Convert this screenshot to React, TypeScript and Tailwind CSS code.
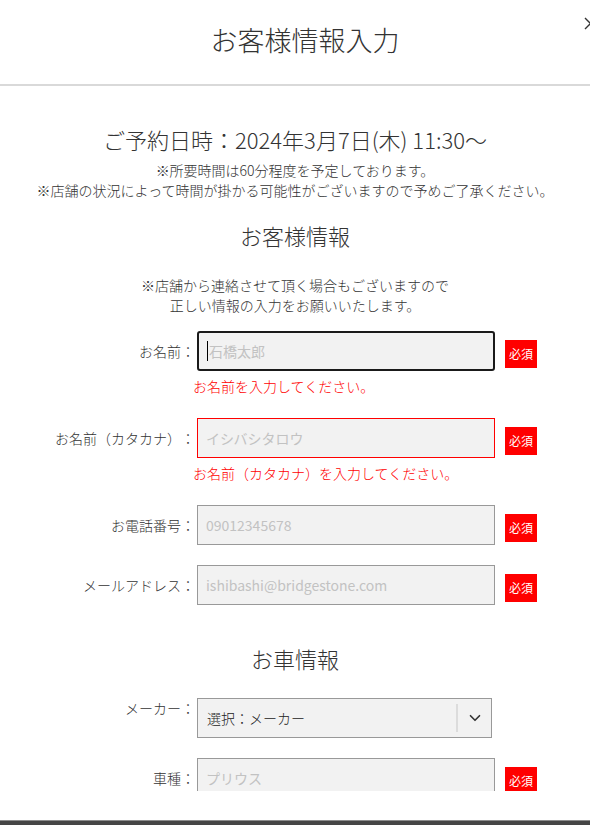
import { ChevronDown } from "lucide-react";

const font = { fontFamily: '"Noto Sans CJK JP", "Noto Sans", sans-serif' };

function Badge() {
  return (
    <span className="mt-[9px] ml-[10px] flex h-[28px] w-[32px] shrink-0 items-center justify-center bg-[#ff0000] text-[12px] leading-none text-white">
      必須
    </span>
  );
}

function Field({
  label,
  placeholder,
  error,
  variant = "normal",
}: {
  label: string;
  placeholder: string;
  error?: string;
  variant?: "normal" | "focus" | "error";
}) {
  const border =
    variant === "focus"
      ? "border-2 border-[#1a1a1a] rounded-[3px]"
      : variant === "error"
        ? "border border-[#ff0000]"
        : "border border-[#999999]";
  return (
    <div className="mb-[20px]">
      <div className="flex items-start">
        <label className="flex h-[40px] w-[197px] shrink-0 items-center justify-end pr-[2px] text-[14px] font-light text-[#333333]">
          {label}
        </label>
        <div className={`flex h-[40px] w-[298px] shrink-0 items-center bg-[#f2f2f2] px-[8px] text-[14px] text-[#c2c2c2] ${border}`}>
          {variant === "focus" && <span className="mr-[1px] h-[20px] w-px bg-black" />}
          {placeholder}
        </div>
        <Badge />
      </div>
      {error && (
        <p className="ml-[193px] pt-[5px] pb-[2px] text-[14px] leading-[20px] font-light text-[#ff0000]">{error}</p>
      )}
    </div>
  );
}

export default function App() {
  return (
    <div className="min-h-screen bg-[#454545] [text-spacing-trim:space-all]" style={font}>
      <div className="relative flex h-[821px] flex-col overflow-hidden border-b border-[#8c8c8c] bg-white">
        <header className="flex h-[86px] shrink-0 items-center justify-center border-b-2 border-[#d9d9d9] pb-[4px] pl-[20px]">
          <h1 className="text-[27px] font-light text-[#333333]">お客様情報入力</h1>
        </header>
        <svg className="absolute top-[17px] right-[-7px] h-[13px] w-[13px]" viewBox="0 0 13 13">
          <path d="M1 1 L12 12 M12 1 L1 12" stroke="#333333" strokeWidth="1.4" fill="none" />
        </svg>

        <div className="h-[705px] shrink-0 overflow-hidden pt-[38px]">
          <div className="text-center font-light text-[#333333]">
            <p className="text-[22px] leading-[30px]">ご予約日時：2024年3月7日(木) 11:30～</p>
            <p className="mt-[6px] text-[14px] leading-[20px]">※所要時間は60分程度を予定しております。</p>
            <p className="text-[14px] leading-[20px]">※店舗の状況によって時間が掛かる可能性がございますので予めご了承ください。</p>

            <h2 className="mt-[20px] text-[22px] leading-[30px]">お客様情報</h2>
            <p className="mt-[25px] text-[14px] leading-[20px]">
              ※店舗から連絡させて頂く場合もございますので
              <br />
              正しい情報の入力をお願いいたします。
            </p>
          </div>

          <div className="mt-[16px]">
            <Field label="お名前：" placeholder="石橋太郎" variant="focus" error="お名前を入力してください。" />
            <Field
              label="お名前（カタカナ）："
              placeholder="イシバシタロウ"
              variant="error"
              error="お名前（カタカナ）を入力してください。"
            />
            <Field label="お電話番号：" placeholder="09012345678" />
            <Field label="メールアドレス：" placeholder="ishibashi@bridgestone.com" />
          </div>

          <h2 className="mt-[38px] text-center text-[22px] leading-[30px] font-light text-[#333333]">お車情報</h2>

          <div className="mt-[25px] mb-[20px] flex items-start">
            <label className="w-[197px] shrink-0 pr-[2px] text-right text-[14px] leading-[20px] font-light text-[#333333]">
              メーカー：
            </label>
            <div className="flex h-[40px] w-[295px] shrink-0 items-center border border-[#999999] bg-[#f2f2f2] text-[14px] font-light text-[#222222]">
              <span className="flex-1 pl-[9px]">選択：メーカー</span>
              <span className="h-[28px] w-[2px] bg-[#dcdcdc]" />
              <span className="flex w-[33px] items-center justify-center">
                <ChevronDown size={18} strokeWidth={2.2} color="#333333" />
              </span>
            </div>
          </div>

          <Field label="車種：" placeholder="プリウス" />
        </div>
      </div>
    </div>
  );
}
